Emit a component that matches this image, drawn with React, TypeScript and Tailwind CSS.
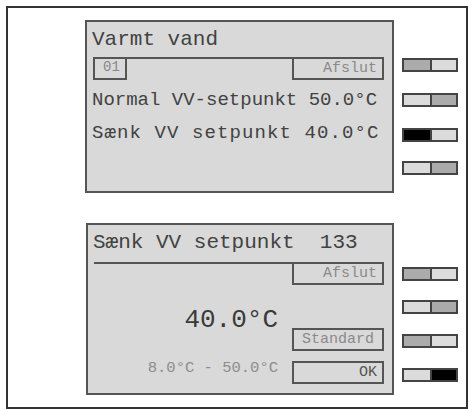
const mono = { fontFamily: '"Liberation Mono", "DejaVu Sans Mono", monospace' };

type Key = { left: string; right: string; mt: string };

const topKeys: Key[] = [
  { left: "bg-[#ababab]", right: "bg-[#dcdcdc]", mt: "mt-[38px]" },
  { left: "bg-[#dcdcdc]", right: "bg-[#ababab]", mt: "mt-[21px]" },
  { left: "bg-black", right: "bg-[#dcdcdc]", mt: "mt-[21px]" },
  { left: "bg-[#dcdcdc]", right: "bg-[#ababab]", mt: "mt-[19px]" },
];

const bottomKeys: Key[] = [
  { left: "bg-[#ababab]", right: "bg-[#dcdcdc]", mt: "mt-[44px]" },
  { left: "bg-[#dcdcdc]", right: "bg-[#ababab]", mt: "mt-[19px]" },
  { left: "bg-[#ababab]", right: "bg-[#dcdcdc]", mt: "mt-[20px]" },
  { left: "bg-[#dcdcdc]", right: "bg-black", mt: "mt-[20px]" },
];

function Keys({ keys }: { keys: Key[] }) {
  return (
    <div className="flex flex-col">
      {keys.map((k, i) => (
        <div key={i} className={`${k.mt} flex h-[14px] w-[56px] border-2 border-[#444]`}>
          <div className={`w-[26px] ${k.left}`} />
          <div className="w-[2px] bg-[#444]" />
          <div className={`flex-1 ${k.right}`} />
        </div>
      ))}
    </div>
  );
}

function Box({ label, className }: { label: string; className?: string }) {
  return (
    <div
      className={`h-[23px] border-2 border-[#555] flex items-center justify-end pr-[5px] text-[15px] leading-[18px] text-[#8a8a8a] ${className ?? ""}`}
    >
      {label}
    </div>
  );
}

export default function App() {
  return (
    <div className="w-[473px] h-[410px] bg-white" style={mono}>
      <div className="ml-[6px] mt-[6px] w-[462px] h-[403px] border-2 border-[#333] pl-[77px] pt-[12px] flex flex-col">
        <div className="flex gap-[8px]">
          <div className="w-[309px] h-[173px] border-2 border-[#555] bg-[#d9d9d9] text-[#424242]">
            <div className="pl-[5px] pt-[6px] text-[21px] leading-[24px]">Varmt vand</div>
            <div className="mt-[5px] ml-[6px] mr-[8px] flex items-start">
              <div className="w-[34px] h-[23px] border-2 border-[#555] text-[14px] leading-[16px] text-[#888] pl-[8px]">01</div>
              <div className="flex-1 border-t-2 border-[#555]" />
              <Box label="Afslut" className="w-[92px]" />
            </div>
            <div className="pl-[5px] mt-[9px] text-[19px] leading-[22px] whitespace-pre">Normal VV-setpunkt 50.0°C</div>
            <div className="pl-[5px] mt-[11px] text-[19px] leading-[22px] tracking-[1.1px] whitespace-pre">Sænk VV setpunkt 40.0°C</div>
          </div>
          <Keys keys={topKeys} />
        </div>

        <div className="mt-[30px] flex gap-[8px]">
          <div className="w-[308px] h-[172px] ml-[1px] border-2 border-[#555] bg-[#d9d9d9] text-[#424242]">
            <div className="pl-[5px] pt-[6px] text-[21px] leading-[24px] whitespace-pre">Sænk VV setpunkt  133</div>
            <div className="mt-[7px] ml-[6px] mr-[8px] flex">
              <div className="flex-1 border-t-2 border-[#555] flex flex-col items-end pr-[14px]">
                <div className="mt-[41px] text-[26px] leading-[30px] text-[#3a3a3a]">40.0°C</div>
                <div className="mt-[24px] text-[15.5px] leading-[18px] text-[#8c8c8c]">8.0°C - 50.0°C</div>
              </div>
              <div className="w-[92px] flex flex-col">
                <Box label="Afslut" />
                <Box label="Standard" className="mt-[43px] !justify-center !pr-0 text-[#6e6e6e]" />
                <Box label="OK" className="mt-[10px] text-[#555]" />
              </div>
            </div>
          </div>
          <Keys keys={bottomKeys} />
        </div>
      </div>
    </div>
  );
}
